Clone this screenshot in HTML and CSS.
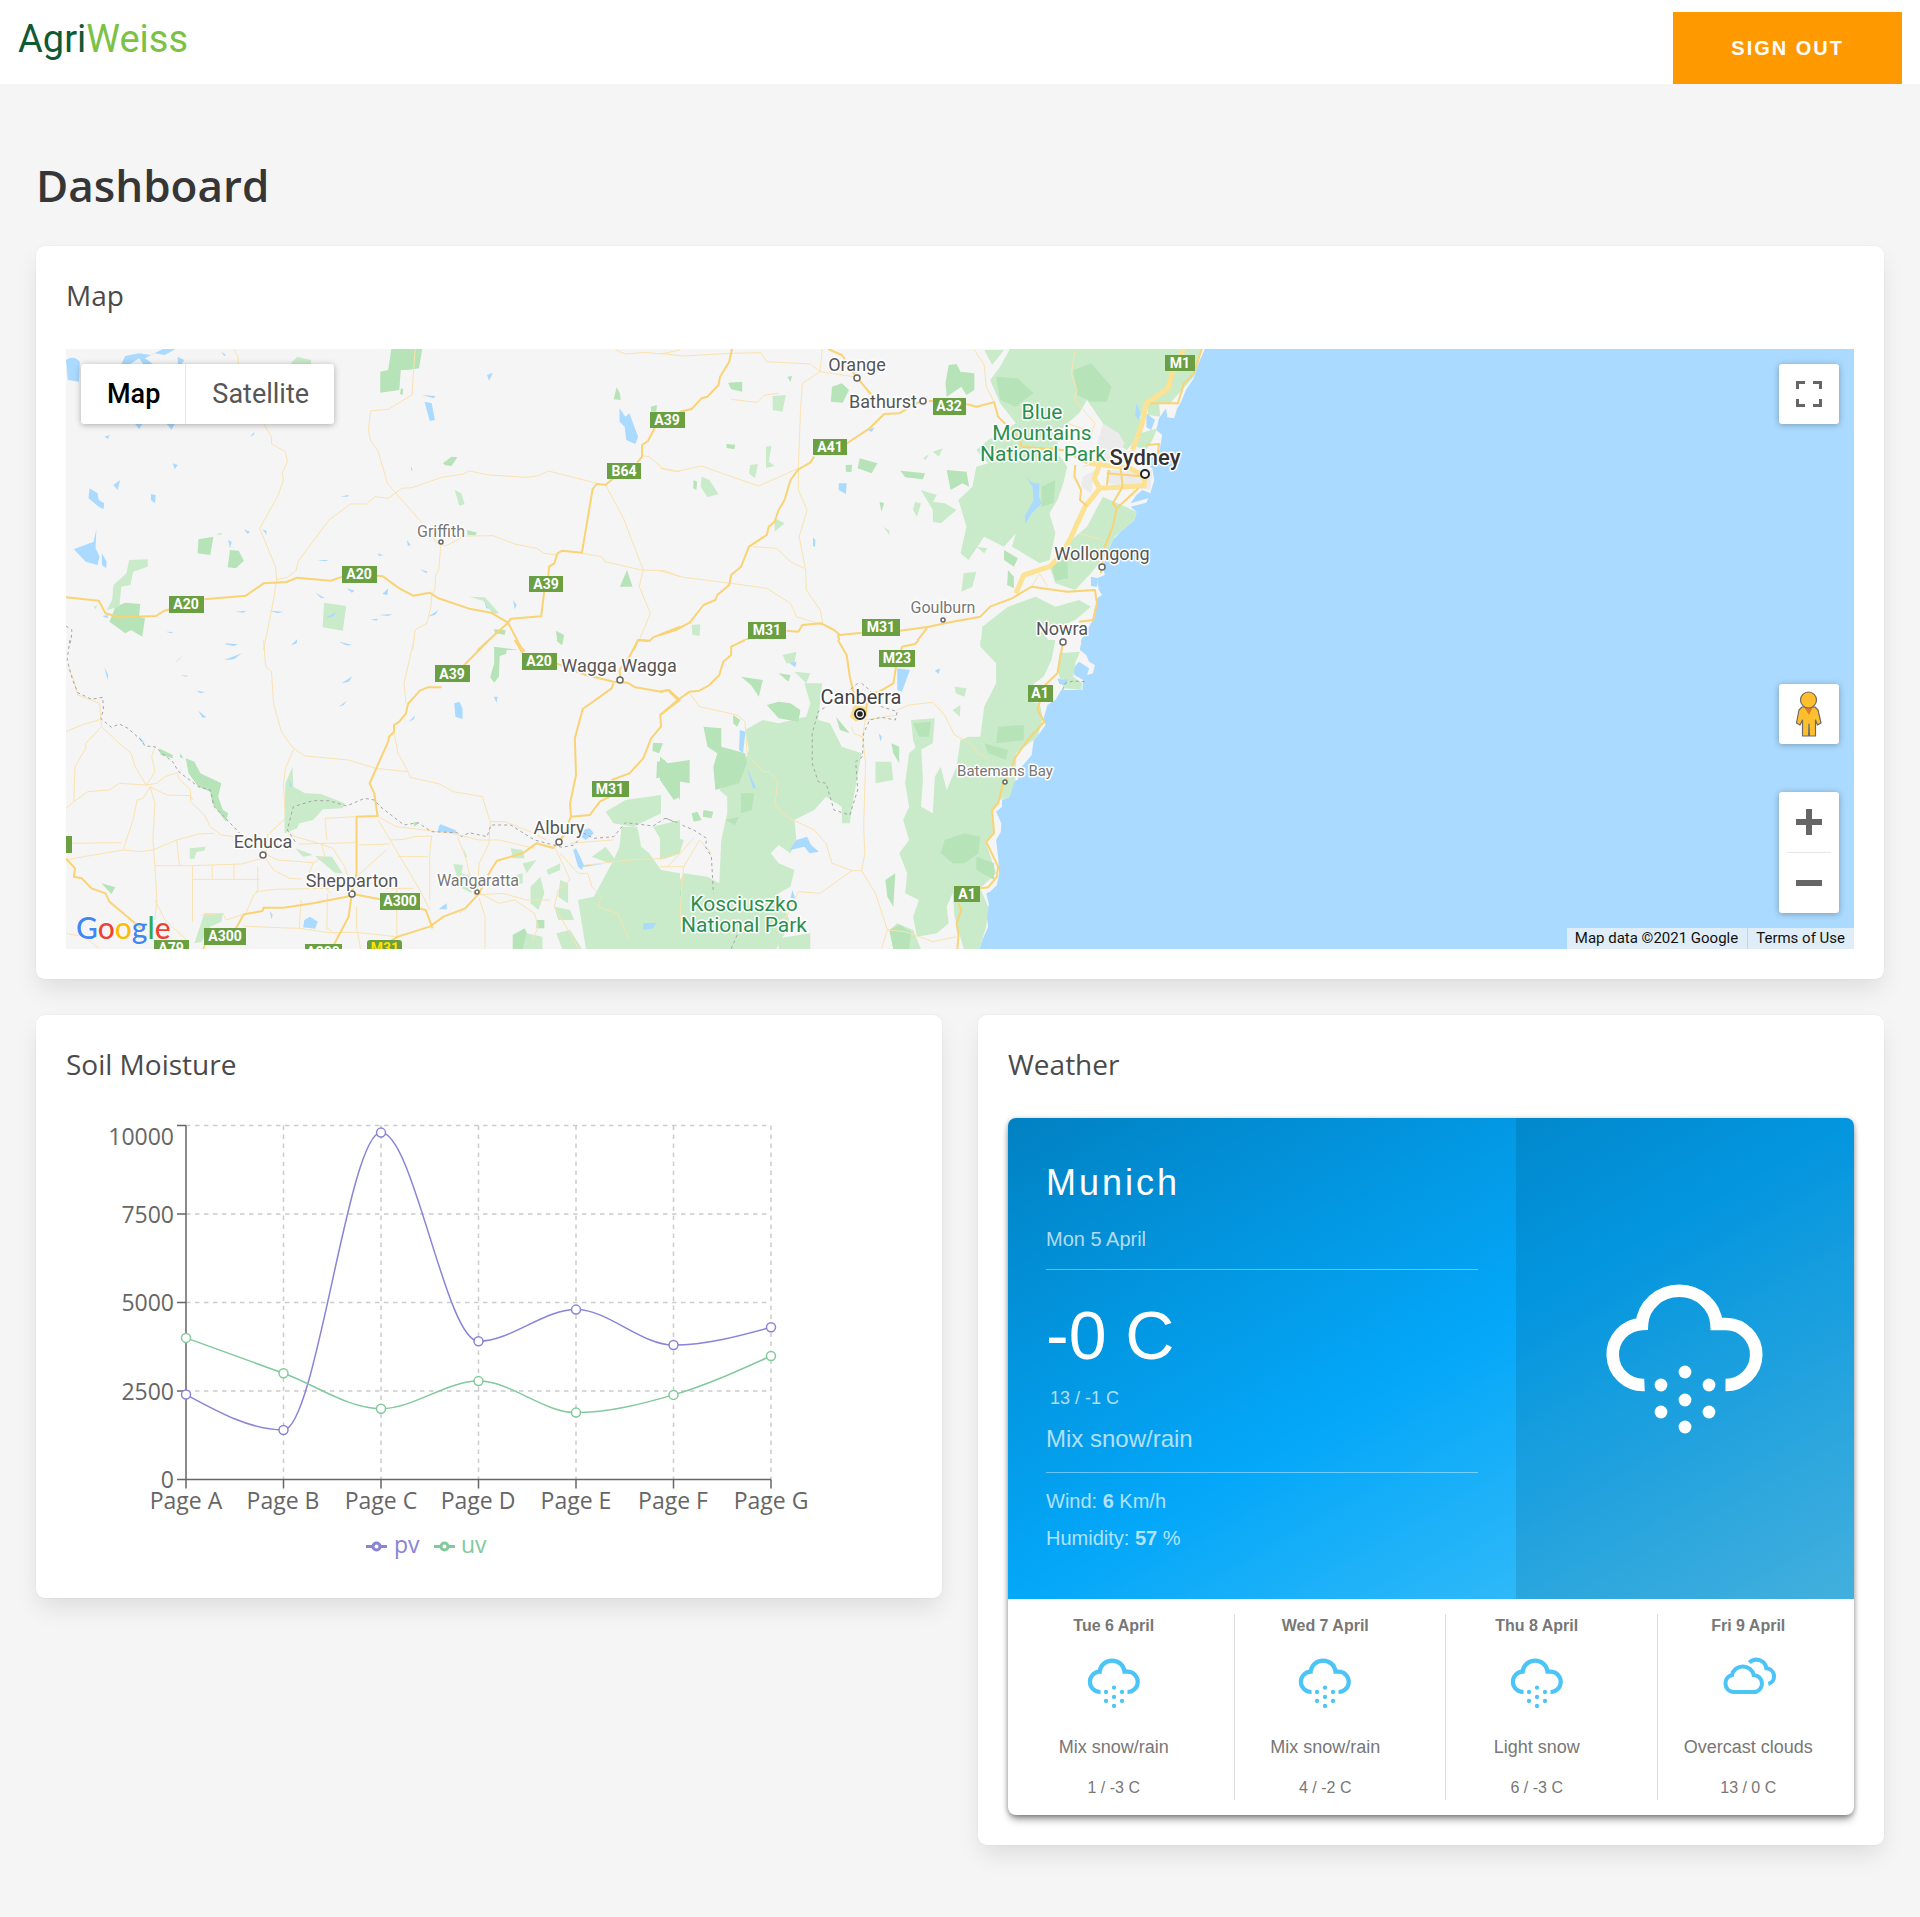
FILE: index.html
```html
<!DOCTYPE html>
<html lang="en">
<head>
<meta charset="utf-8">
<meta name="viewport" content="width=device-width, initial-scale=1">
<title>AgriWeiss Dashboard</title>
<link rel="stylesheet" href="styles.css">
</head>
<body>
<svg class="sprite" aria-hidden="true">
  <symbol id="icon-snow" viewBox="0 0 168 168">
    <path d="M43.500 108A30.5 30.5 0 0 1 41 47A37.3 35 0 0 1 115.500 47H125A30.500 30.500 0 0 1 124.500 108" fill="none" stroke="currentColor" stroke-width="12.600"/>
    <g fill="currentColor"><circle cx="84" cy="95" r="6.400"/><circle cx="60" cy="108" r="6.400"/><circle cx="108" cy="108" r="6.400"/><circle cx="84" cy="123" r="6.400"/><circle cx="60" cy="135" r="6.400"/><circle cx="108" cy="135" r="6.400"/><circle cx="84" cy="150" r="6.400"/></g>
  </symbol>
  <symbol id="icon-clouds" viewBox="0 0 168 168" overflow="visible">
    <g fill="none" stroke="currentColor" stroke-width="12">
      <path d="M39 108A26 26 0 0 1 36 57A33 31 0 0 1 101 57A26 26 0 0 1 107 108Z"/>
      <path d="M88 20A30 30 0 0 1 139 37A24 24 0 0 1 145 84"/>
    </g>
  </symbol>
</svg>

<header class="topbar">
  <a class="logo" href="#"><span class="logo-agri">Agri</span><span class="logo-weiss">Weiss</span></a>
  <button class="sign-out" type="button">SIGN OUT</button>
</header>

<main class="page">
  <h1 class="page-title">Dashboard</h1>

  <section class="card">
    <h2 class="card-title">Map</h2>
    <div class="map">
      <svg class="map-canvas" viewBox="66 349 1788 600" preserveAspectRatio="xMinYMin slice" role="img" aria-label="Map of south-east Australia">
        <!-- north-east: Blue Mountains and Sydney -->
        <g transform="translate(660 340) scale(.39541 .33333)">
          <path class="land" d="M-1600 0H1385L1378 27 1360 75 1350 115 1330 150 1318 185 1308 205 1300 235 1283 232 1280 205 1262 235 1255 270 1270 285 1265 320 1262 340 1240 350 1225 370 1245 385 1250 420 1240 460 1220 450 1205 465 1190 490 1235 475 1230 488 1190 500 1205 515 1200 540 1165 575 1145 600 1135 630 1120 680 1125 705 1105 715 1110 750 1118 765 1105 775 1100 830 1090 850 1080 870 1065 900V915H-1600Z"/>
          <path class="park" d="M885 27H1370L1350 110 1320 150 1290 190 1240 190 1215 230 1220 280 1180 330 1130 290 1120 250 1080 180 1060 220 1020 260 1000 330 1030 380 1020 430 1005 480 985 520 1000 580 985 660 960 670 890 620 900 580 870 620 820 590 780 660 760 640 775 560 755 480 790 440 800 380 830 370 800 330 830 300 900 250 860 190 835 120 860 80Z"/>
          <path class="park" d="M1120 470L1205 515 1200 540 1150 590 1130 640 1090 700 1050 750 1000 730 985 680 1040 600 1080 560ZM880 800L950 770 1000 800 1060 780 1090 800 1050 840 970 880 1000 930H810L815 860ZM820 30L870 30 840 75ZM1230 185L1262 190 1265 230 1235 225ZM1215 280L1258 265 1245 300 1230 330 1205 320ZM285 168L318 165 310 215 285 210ZM268 320L282 318 275 365 290 378 268 384ZM228 375L248 372 240 415 225 400ZM105 410L125 420 148 462 120 472 103 440ZM290 535L315 550 290 575ZM768 700L800 695 790 740 762 755ZM80 855L102 853 100 888 82 884ZM645 485L660 490 650 530 640 510ZM660 450L700 465 690 485 720 490 750 510 710 550 690 545 690 510ZM800 620L828 625 820 640ZM665 355L680 343 672 360ZM690 335L715 325 705 350ZM565 560L580 572 580 585Z"/>
          <path class="wood" d="M1045 90L1090 70 1142 140 1130 185 1090 185 1055 165ZM850 110L905 115 945 160 900 200 860 180ZM730 75L750 72 760 95 795 100 795 150 775 165 762 140 725 170 722 130ZM172 128L208 125 208 155 180 148ZM435 140L460 130 478 150 462 188 432 185ZM322 110L334 108 330 126ZM505 355L550 370 535 400 500 385ZM470 375L486 374 484 396 470 395ZM608 392L670 400 665 418 620 412ZM725 390L775 395 782 440 765 430 735 450ZM555 485L567 490 560 515ZM990 675L1030 655 1032 715 1000 722ZM965 440L1000 420 995 490 965 500ZM880 690L895 710 895 745 878 735ZM870 630L905 655 895 680 870 660ZM168 312L190 314 188 328 168 324ZM85 420L94 425 92 450 84 445Z"/>
          <path class="lake" d="M928 415L945 430 960 430 958 470 965 490 940 520 925 550 922 530 945 480 942 440ZM452 430L472 430 470 462 452 450ZM387 592L393 600 392 620 387 618ZM525 270L542 262 536 276ZM1230 220L1252 240 1242 270 1230 262ZM1090 710L1108 715 1105 740 1090 738ZM1205 190L1215 220 1210 240 1202 225Z"/>
          <path class="town" d="M1120 250L1160 280 1175 310 1150 370 1100 340ZM1100 390L1090 460 1065 440 1070 410ZM1130 390L1245 390 1240 450 1190 440 1130 430Z"/>
          <g class="road-minor">
            <path d="M0 40L60 48 180 40 255 38 270 65 380 72 405 95 360 130 355 220 350 380 350 450 372 510 352 590 368 690 370 750 405 810 412 850"/>
            <path d="M410 27L405 95 490 110M180 178L245 187 265 165 300 160M0 385L40 395 105 378 205 420 250 438 350 385M0 693L60 712 180 730 270 745 330 790 345 830 412 855M235 620L295 625 330 665 365 685M795 30L820 75 825 140 845 185M1050 30L1040 100 1055 150 1048 180 1100 250 1090 290M1030 250L1080 270M1070 380L1200 330M940 740L960 700 980 740M1080 500L1050 545 1040 600M1060 580L1120 600"/>
          </g>
          <g class="road">
            <path d="M182 27L175 65 152 110 148 135 120 170 105 175 80 207 50 215M425 27L460 45 490 100 500 115 535 165M680 183L710 183M775 192L800 200 845 187 855 230 905 290 915 320 1020 330 1080 370"/>
            <path d="M660 183L605 220 567 222 530 265 470 312M390 350L380 368 350 388 330 420 315 480 300 510 290 545 275 560 270 585 225 620 205 680 180 705 175 735 145 765 140 780 110 795 75 848 40 870 0 885M320 872L350 875 360 855 408 850 440 870 455 885 510 878M607 872L680 860 720 850 810 830 835 800 890 775 940 740 1030 755 1100 750 1105 790 1095 840 1060 845M450 885L455 910 465 930M675 865L645 910 610 925M225 895L180 920"/>
          </g>
          <g class="freeway">
            <path d="M1325 27L1295 100 1285 145 1230 190 1220 250 1195 330"/>
            <path d="M1085 370L1190 385 1225 410M1110 380L1098 415 1112 445 1075 500 1040 590 1015 645 985 680 920 705 900 760M1112 445L1225 437 1225 400"/>
          </g>
          <g class="road"><path d="M1370 27L1350 100 1325 130 1310 190 1240 190M1135 390L1130 435M1165 385L1170 440M1170 440L1145 490 1155 505 1145 560 1125 620 1115 700M1210 445L1155 505M1050 375L1048 410 1065 450 1062 480 1080 498M1130 400L1230 410M1230 315L1262 312 1258 350"/></g>
        </g>
        <!-- south-east: Canberra and the coast -->
        <g transform="translate(660 640) scale(.39541 .33333)">
          <path class="land" d="M-1600 0H1065L1062 30 1078 45 1085 65 1100 75 1095 100 1080 105 1085 85 1060 65 1045 85 1048 105 1070 120 1068 150 1015 150 1000 180 980 195 970 235 975 255 960 280 945 300 940 345 915 380 905 420 880 425 885 470 865 480 865 500 850 515 863 550 862 575 850 600 855 650 858 700 852 735 835 755 825 760 832 795 825 820 830 860 815 900 805 935H-1600Z"/>
          <path class="park" d="M810 0H1000L990 60 970 110 935 140 935 185 960 190 968 235 955 290 900 340 900 410 885 470 860 480 840 515 845 580 825 610 850 700 810 745 830 800 825 860 805 935H770L745 830 740 760 725 800 730 850 700 880 650 890 640 830 655 780 620 760 625 700 605 640 630 600 615 540 630 500 620 430 630 340 660 310 665 420 660 500 690 520 695 410 710 380 725 450 750 380 760 300 780 290 810 290 820 200 850 130 850 70 810 20Z"/>
          <path class="park" d="M215 270L260 240 300 250 370 230 380 190 365 130 410 130 400 240 430 250 460 320 510 340 490 470 480 550 460 550 460 500 420 470 390 510 340 540 345 600 330 640 300 615 280 640 300 670 340 690 330 740 300 760 330 850 290 935H0V830L60 700 120 710 150 730 155 600 170 520 170 470 150 450 200 400 225 330ZM635 240L695 235 690 310 650 335 640 300ZM545 365L585 365 590 420 545 430ZM300 895L380 880 380 927H300ZM580 870L600 850 640 870 660 927H590ZM745 140L775 145 770 170 748 160ZM740 210L760 195 758 230ZM0 580L60 600 50 640 0 660ZM1010 40L1062 35 1050 70 1045 110 1068 130 1065 150 1020 145 1005 90ZM310 45L345 35 340 70 320 70ZM340 95L380 100 370 130Z"/>
          <path class="wood" d="M205 110L260 120 250 170 230 135ZM270 195L300 185 330 190 355 210 350 245 300 235ZM300 100L330 105 325 125ZM110 260L155 265 155 320 215 340 220 370 200 430 140 450 135 380 145 340 120 320ZM445 230L480 280 455 270ZM720 600L770 580 810 590 805 640 770 670 740 670 710 640ZM800 650L845 670 845 720 800 690ZM570 720L595 700 590 800 575 770ZM585 310L605 320 605 370 590 340ZM0 720L30 705 55 760 40 800 0 790ZM0 350L20 370 75 360 75 430 30 420 50 470 35 480 0 420ZM165 540L200 530 190 555ZM110 510L135 515 130 535 108 530ZM855 260L920 255 920 300 850 310ZM60 740L40 760ZM80 520L95 515 105 540 85 545ZM185 225L203 240 195 260 185 250ZM580 870L605 855 635 875 630 927H590ZM640 250L685 245 680 290 655 290ZM205 460L238 460 232 510 205 520ZM820 310L850 320 880 330 875 360 830 340Z"/>
          <path class="lake" d="M600 85L632 90 612 155 600 150ZM202 270L216 275 210 340 200 330ZM220 385L244 445 235 445ZM345 600L372 590 382 615 402 635 378 640 365 620 328 630ZM553 280L561 290 558 305ZM505 540L512 580ZM695 92L708 85 705 102ZM328 70L345 65 342 82ZM335 750L342 775 330 775ZM1005 115L1018 120 1033 118 1025 135 1010 132Z"/>
          <g class="road-minor">
            <path d="M75 160L100 200 195 225 215 245 220 340 260 395 275 395 298 425 290 495 320 530 390 570 420 610 435 670 485 692 405 760 350 755 320 830 270 870M510 692L545 760 575 870 620 875 690 905 750 890M575 870L560 927M600 210L630 195 690 187 720 225 745 285 785 310 805 340 830 355M0 680L60 680 100 600 130 640M60 680L55 740 50 860 40 927M20 680L85 595M485 692L510 692 518 640 515 560 520 370 512 290 520 235M485 260L490 280 510 290M520 240L600 225"/>
          </g>
          <g class="road"><path d="M0 155L20 150 45 180 75 155 100 152 125 135 150 105 160 65 180 45 180 20 215 0M0 225L45 180M450 0L472 45 480 110 500 210M655 0L645 12 612 20 597 80 590 130 555 155 525 165 520 230M1018 15L1005 100 970 140 955 210 972 245 930 300 897 355 885 400 868 430 855 490 840 510 845 580 825 605 855 680 852 710 830 742 810 745M755 790L762 810 750 850 755 885 752 927"/></g>
          <path class="city" d="M490 195L520 200 515 235 495 245 480 230Z"/>
          <path class="border" d="M500 130L480 150 480 170M510 130L530 150 560 200 600 215 595 240 560 232 530 240 515 280 512 350 495 365 500 450 480 525 440 510 420 430 400 425 385 370 385 280 400 215 420 200M15 535L85 570 118 595 115 620 130 650 135 760M195 885L180 927M1018 150L1025 130 1045 123 1075 125"/>
        </g>
        <!-- north-west: Griffith and the A20 -->
        <g transform="translate(60 340) scale(.39541 .33333)">
          <path class="wood" d="M838 27H916L908 85 880 90 862 90 858 150 810 158 810 95 830 90ZM862 145L868 148 866 165 860 162ZM968 370L990 350 1005 352 990 378 975 376ZM350 598L388 590 380 645 348 640ZM430 630L452 632 465 662 445 685 424 682ZM1030 570L1055 578 1050 586 1030 584ZM140 800L165 788 203 792 200 830 215 835 208 890 180 870 165 880 125 845ZM1434 690L1448 740H1416ZM1254 872L1275 885 1270 915 1258 905ZM1097 868L1127 870 1125 884 1100 880ZM1408 142L1416 160 1418 180 1400 178ZM1494 200L1510 195 1508 215H1495ZM1097 920L1160 930H1100ZM888 378L892 390 888 392Z"/>
          <path class="park" d="M668 788L724 798 715 872 664 862ZM175 660L222 658 222 680 185 695 178 735 155 740 150 800 118 810 132 780 135 735 168 700ZM998 450L1015 460 1023 492 1010 497ZM1035 770L1075 772 1110 820 1095 822 1070 782ZM585 68L600 50 635 60 635 72H585ZM395 582L412 578 405 586ZM85 800L95 795 90 808Z"/>
          <path class="lake" d="M15 60Q35 45 50 65L48 125 20 120ZM155 72L165 48 200 40 230 45 260 27 292 27 265 45 240 40 215 55 235 72H210L200 55 178 72ZM298 50L314 60 308 72H298ZM922 185L940 190 948 240 935 243ZM1080 105L1095 98 1085 122ZM1415 205L1430 230 1440 220 1462 290 1455 312 1432 300 1428 260 1415 245ZM75 445L95 460 98 480 112 490 110 508 98 500 72 475ZM135 435L152 420 146 450ZM230 462L242 465 240 490 230 480ZM285 370L298 375 290 388ZM35 628L85 605 92 568 90 625 100 650 95 675 65 665ZM106 640L118 665 117 685 106 675ZM425 600L434 605 430 625ZM465 568L480 575 475 582ZM512 568L522 572 522 585ZM877 600L887 615 880 618ZM805 640L818 646 806 648ZM650 660L680 660 670 664ZM915 165L950 168 945 175ZM710 470L730 464 728 470ZM645 757L670 775 660 774ZM725 745L745 752 738 758ZM815 762L830 745 828 765ZM910 687L930 695 926 700ZM1074 785L1085 808 1078 804ZM1146 780L1155 795 1150 808ZM670 835L700 815 690 830ZM785 838L805 836 800 842ZM530 812L565 815 550 820ZM442 815L470 812 465 818ZM930 830L958 810 948 825ZM805 825L840 822 830 828ZM415 912L450 912 440 918ZM585 915L600 898 598 910ZM705 905L738 915 725 916ZM268 875L287 876 280 880ZM480 290L492 275 490 285ZM408 35L420 45 415 48ZM112 290L125 285 122 297ZM270 252H290L282 270ZM190 252H208L200 268ZM107 828L122 825 120 835Z"/>
          <g class="road-minor">
            <path d="M440 27L450 50 452 80M515 252L535 290 535 312 570 335 575 365 562 400 565 420 552 465 505 565 545 680 548 720 540 780 515 930M898 27L890 165 830 208 785 213 780 270 785 300 805 335 828 430 848 458 915 548 930 570 950 605 975 618 1025 588 1095 587 1150 612 1205 625 1225 640 1255 645"/>
            <path d="M548 718L575 712 597 692 602 665 680 540 735 492 775 492 797 470 830 475 865 445 890 443 965 412 1020 402 1035 393 1085 405 1180 412 1210 407 1235 393 1365 432M963 615L958 690 950 705 948 750 940 765 938 800 928 850 898 870 892 930M1380 435L1425 535 1475 690 1465 740 1493 820 1465 900M1320 640L1370 650 1378 665 1470 690 1530 692 1568 710M1470 347L1490 350 1525 385 1568 395M1405 30L1430 42 1480 37 1520 42 1568 30"/>
          </g>
          <path class="road" d="M15 772L98 782 115 820 150 832 243 828 262 813 280 808M365 778L470 767 515 730 573 726 600 713 685 722 715 710M800 707L817 709 855 743 893 767 935 758 955 774 1035 806 1090 818 1133 848 1165 920 1175 935M1055 932L1133 848 1140 836 1217 829 1225 750M1235 708L1237 680 1250 670 1258 640 1270 632 1320 638 1347 447 1357 432 1380 434 1400 415M1460 368L1472 350 1472 315 1487 303 1505 262M1450 932L1462 900 1492 902 1500 892 1568 860"/>
          <path class="border" d="M15 858L30 870 28 900 22 920"/>
        </g>
        <!-- south-west: Murray river and Shepparton -->
        <g transform="translate(60 640) scale(.39541 .33333)">
          <path class="wood" d="M318 355L340 365 355 400 408 430 400 470 412 510 425 520 420 545 385 490 380 455 350 440 325 400ZM1098 22L1130 28 1128 42 1112 48 1110 110 1098 128 1088 112 1098 70ZM250 325L285 345 285 355 255 345ZM1255 0H1272L1268 14ZM1500 308L1525 310 1515 340 1498 332ZM1510 365L1530 360 1530 410 1508 415ZM1540 390L1568 410V480L1550 440ZM1525 720L1568 705V800L1520 770ZM105 730L140 742 130 762ZM1145 885L1175 865 1200 927H1145ZM1205 840H1225V865H1205ZM895 545L908 550 895 560ZM305 340L312 355 303 352Z"/>
          <path class="park" d="M570 430L588 380 590 440 620 460 660 462 720 490 715 505 665 508 640 540 605 550 600 565 568 580V500ZM328 625L368 620 365 632 345 636 340 656H328ZM595 625L640 645 615 650ZM645 648L688 650 715 700 695 698ZM995 672L1020 675 1015 700 1045 710 1040 760 1010 740ZM365 820H412L408 845 380 860 358 905 340 910ZM1140 625L1170 630 1175 655 1145 655ZM1380 515L1430 480 1520 465 1520 520 1450 560 1400 550ZM1330 927L1310 780 1350 770 1400 660 1415 620 1420 560 1460 560 1470 620 1490 640 1520 690 1568 700V927ZM1230 690L1265 670 1265 690 1235 705ZM1170 670L1205 660 1180 700ZM1190 740L1215 710 1225 760 1210 810 1190 790ZM1265 720L1285 730 1285 790 1260 770ZM1250 800L1290 810 1300 840 1260 840ZM1180 880L1220 890 1220 927H1170ZM1255 880L1290 870 1320 927H1270ZM1345 650L1380 620 1405 660 1390 670ZM1170 700L1155 705 1155 735 1170 730ZM1020 625L1030 650 1025 655ZM1500 560L1568 540V600L1530 620Z"/>
          <path class="lake" d="M997 190L1010 185 1018 205 1018 237 1000 230ZM1097 170L1107 170 1104 188ZM200 290L215 310 205 305ZM618 840L632 830 652 845 645 866 615 862ZM965 800L978 790 978 808H958ZM958 560L962 553 1000 570 1005 580 955 575ZM1298 630L1305 625 1325 675 1372 672 1322 682 1320 690 1310 680ZM1320 570L1340 565 1350 580 1330 600 1318 590ZM530 812L538 825 535 838ZM1475 850L1508 848 1500 865 1475 870ZM415 60L460 40 440 58ZM290 68L312 45 300 60ZM415 10L445 12 440 18ZM112 80L122 105 120 120ZM345 152L368 156 355 160ZM350 212L370 232 360 233ZM712 130L740 108 730 125ZM705 200L725 182 718 195ZM883 245L898 225 895 238ZM305 105L325 107 318 110ZM585 15L600 0 598 10ZM705 5L738 15 725 16ZM580 420L586 435 582 442Z"/>
          <g class="road-minor">
            <path d="M15 275L55 255 105 237M20 80L35 120 45 165 100 190 105 260 65 310 65 325 38 380 35 485 15 505M105 260L150 310 180 340 190 380 218 435 150 430 125 450 70 455 35 485M218 435L230 415 240 395 232 350 240 320M218 435L245 430 265 410 297 398 300 415 330 450 330 485 365 525 380 560 408 585 455 592M228 440L270 465 330 467 335 480M228 440L210 475 195 480 185 540 165 610 160 630M228 440L240 490 235 600 240 680 245 780 240 840M15 610L155 608M15 660L60 650 160 630 200 635 235 630 295 600 350 582 390 580M295 600L302 675"/>
            <path d="M515 0L520 80 535 95 540 190 560 275 590 325 620 348 730 360 798 385 880 395 885 412 960 432 995 455 1068 470 1088 545 1085 610 1060 670 1055 755M895 0L870 130 875 190M845 280L855 340 880 395M590 330L570 385 565 430 570 535 525 585 520 650 M525 645L550 660 640 668M520 655L540 690 580 715 610 717M670 535L745 530M670 535L675 600M575 575L595 590 660 612 690 625 720 680 740 760M605 612L745 608M755 615L835 612M660 610L670 645 640 670 630 700 685 760M240 677L335 677 460 672 510 655M335 677V845M335 718H505M385 677V718M440 675V718M500 680V755L490 765 470 820M495 755L545 748 680 745M605 865L610 780M605 865L530 862 465 858M605 865L680 878 750 877 850 890M750 800L750 860 760 927M750 710L825 630M855 650H930M825 745H895M805 540L815 560 845 620 910 750 935 810M835 600L870 598 895 590 940 588 935 640V780M805 530L850 560 920 570 990 580 1060 600 1110 600 1200 625M1005 590L1025 650 1050 770 1010 820M1090 545L1125 545 1190 575 1230 600M1055 755L1110 790 1150 780 1200 820 1210 860 1195 900M1060 775L1075 830 1075 927M1050 765L1120 760 1180 780 1240 780M1250 620L1275 680 1290 720 1260 750 1250 800 1300 900 1310 927M1265 640L1310 700 1335 700 1345 740 1370 770 1360 800 1410 820 1440 900M1290 610L1340 605 1400 600M1320 685L1330 675 1440 660 1530 655 1568 640M15 880L60 890 100 927M240 780L265 840 325 905"/>
            <path d="M676 760L675 870M851 710L852 890M677 865L700 885M358 825L412 820 420 840 465 822M245 880L245 927"/>
          </g>
          <g class="road">
            <path d="M1085 0L1020 78M965 142L930 142 910 152 880 192 875 220 858 245 845 255 845 275 832 290 830 305 798 390 783 430 795 460 803 528 750 530 750 700 738 760 730 830 690 920M1150 0L1170 40M1255 70L1330 105 1400 125 1435 128 1455 142 1520 155 1540 150 1568 180M1400 130L1395 145 1322 207 1302 295 1305 405 1290 490 1292 530 1275 585 1250 620M1417 118L1415 90 1440 50 1462 0 1492 3M1292 530L1340 525 1365 485 1390 470M1395 420L1440 400 1475 355 1495 295 1520 260 1518 225 1568 180M1250 625L1205 610 1170 640 1105 662 1085 700 1060 760 1025 805 970 830 935 860 855 890 800 927M740 762L810 778M735 768L640 790 565 803 515 803 512 813 465 823 445 865M363 927L368 905M908 805L925 810 942 865M15 655L38 685 35 710 55 715 80 745 115 760 125 785 190 850 210 870"/>
          </g>
          <path class="border" d="M25 0L18 60 32 120 45 158 80 178 108 172 110 210 103 235 130 262 150 252 172 265 205 300 215 318 240 320 260 342 285 365 300 395 350 440 380 450 390 500 415 530 455 580M595 605L575 570 590 500 640 482 680 482 725 498 770 475 795 480 810 500 870 555 905 548 940 575 1005 578 1015 590 1035 578 1080 590 1090 555 1140 555 1200 600 1270 622 1300 615 1325 580 1350 595 1400 590 1430 548 1500 558 1530 535 1568 550"/>
        </g>

        <g class="markers">
          <circle cx="857" cy="378" r="3"/><circle cx="923" cy="401" r="3"/><circle cx="441" cy="542" r="2"/><circle cx="1102" cy="567" r="3"/><circle cx="943" cy="620" r="2"/><circle cx="1063" cy="642" r="3"/><circle cx="620" cy="680" r="3"/><circle cx="1005" cy="782" r="2"/><circle cx="263" cy="855" r="3"/><circle cx="352" cy="894" r="3"/><circle cx="477" cy="892" r="2"/><circle cx="559" cy="842" r="3"/>
          <circle class="marker-city" cx="1145" cy="474" r="4"/><circle class="marker-city" cx="860" cy="714" r="5"/><circle class="marker-dot" cx="860" cy="714" r="2"/>
        </g>
        <g class="place">
          <text x="857" y="371">Orange</text><text x="883" y="408">Bathurst</text><text x="1102" y="560">Wollongong</text><text x="1062" y="635">Nowra</text><text x="619" y="672">Wagga Wagga</text><text x="263" y="848">Echuca</text><text x="352" y="887">Shepparton</text><text x="559" y="834">Albury</text>
          <text class="place-small" x="441" y="537">Griffith</text><text class="place-small" x="943" y="613">Goulburn</text><text class="place-tiny" x="1005" y="776">Batemans Bay</text><text class="place-small" x="478" y="886">Wangaratta</text>
          <text class="place-capital" x="861" y="704">Canberra</text><text class="place-metro" x="1145" y="465">Sydney</text>
          <text class="place-park" x="1042" y="419">Blue</text><text class="place-park" x="1042" y="440">Mountains</text><text class="place-park" x="1043" y="461">National Park</text>
          <text class="place-park" x="744" y="911">Kosciuszko</text><text class="place-park" x="744" y="932">National Park</text>
        </g>
        <g class="shields">
          <rect x="650" y="412" width="35" height="16"/><text x="667" y="425">A39</text>
          <rect x="607" y="463" width="34" height="16"/><text x="624" y="476">B64</text>
          <rect x="813" y="439" width="34" height="16"/><text x="830" y="452">A41</text>
          <rect x="933" y="398" width="33" height="17"/><text x="949" y="411">A32</text>
          <rect x="1165" y="355" width="30" height="16"/><text x="1180" y="368">M1</text>
          <rect x="342" y="566" width="35" height="17"/><text x="359" y="579">A20</text>
          <rect x="529" y="576" width="34" height="16"/><text x="546" y="589">A39</text>
          <rect x="169" y="596" width="35" height="17"/><text x="186" y="609">A20</text>
          <rect x="748" y="622" width="38" height="17"/><text x="767" y="635">M31</text>
          <rect x="862" y="619" width="38" height="17"/><text x="881" y="632">M31</text>
          <rect x="879" y="650" width="36" height="17"/><text x="897" y="663">M23</text>
          <rect x="522" y="653" width="35" height="17"/><text x="539" y="666">A20</text>
          <rect x="435" y="665" width="35" height="17"/><text x="452" y="679">A39</text>
          <rect x="1028" y="685" width="25" height="17"/><text x="1040" y="698">A1</text>
          <rect x="592" y="781" width="37" height="16"/><text x="610" y="794">M31</text>
          <rect x="954" y="886" width="26" height="16"/><text x="967" y="899">A1</text>
          <rect x="380" y="893" width="40" height="17"/><text x="400" y="906">A300</text>
          <rect x="204" y="928" width="42" height="17"/><text x="225" y="941">A300</text>
          <rect x="154" y="940" width="35" height="17"/><text x="171" y="953">A79</text>
          <rect x="305" y="944" width="37" height="17"/><text x="323" y="957">A300</text>
          <rect x="367" y="940" width="35" height="17" rx="3"/><text class="shield-gold" x="385" y="953">M31</text>
          <rect x="42" y="836" width="30" height="17"/>
        </g>
      </svg>

      <div class="map-types">
        <button class="map-type map-type-active" type="button">Map</button>
        <button class="map-type" type="button">Satellite</button>
      </div>
      <div class="map-tools">
        <button class="map-button map-fullscreen" type="button" aria-label="Toggle fullscreen view">
          <svg width="28" height="28" viewBox="0 0 28 28" fill="none" stroke="#666" stroke-width="3"><path d="M2.500 9V2.500H10M18 2.500H25.500V9M25.500 19V25.500H18M10 25.500H2.500V19"/></svg>
        </button>
        <button class="map-button map-pegman" type="button" aria-label="Street View">
          <svg width="28" height="46" viewBox="0 0 28 46" stroke="#6d6a66" stroke-width="1.200" stroke-linejoin="round"><path fill="#fdbf2d" d="M7 16H20L23 19 26 32 22.500 34 20.500 29V45H14.500L14 33 13.500 45H7.500V29L5 34 1.500 32 4 19Z"/><path fill="#e17b2c" stroke="none" d="M9 16H18L14 24Z"/><circle cx="13.500" cy="9" r="8" fill="#fdbf2d"/></svg>
        </button>
        <div class="map-zoom">
          <button class="map-zoom-button" type="button" aria-label="Zoom in"><svg width="26" height="26" viewBox="0 0 26 26" fill="#666"><path d="M10 0H16V10H26V16H16V26H10V16H0V10H10Z"/></svg></button>
          <button class="map-zoom-button" type="button" aria-label="Zoom out"><svg width="26" height="26" viewBox="0 0 26 26" fill="#666"><path d="M0 10H26V16H0Z"/></svg></button>
        </div>
      </div>
      <a class="google" href="#" aria-label="Google"><span class="g-blue">G</span><span class="g-red">o</span><span class="g-yellow">o</span><span class="g-blue">g</span><span class="g-green">l</span><span class="g-red">e</span></a>
      <div class="map-legal"><span class="legal-item">Map data ©2021 Google</span><a class="legal-item" href="#">Terms of Use</a></div>
    </div>
  </section>

  <div class="columns">
    <section class="card">
      <h2 class="card-title">Soil Moisture</h2>
      <svg class="chart" width="750" height="450" viewBox="0 0 750 450" role="img" aria-label="Soil moisture line chart">
        <path class="grid" d="M120 7.500H705M120 96H705M120 184.500H705M120 273H705M217.500 7.500V361.500M315 7.500V361.500M412.500 7.500V361.500M510 7.500V361.500M607.500 7.500V361.500M705 7.500V361.500"/>
        <path class="axis" d="M120 7.500V361.500H705M111 7.500H120M111 96H120M111 184.500H120M111 273H120M111 361.500H120M120 361.500V370.500M217.500 361.500V370.500M315 361.500V370.500M412.500 361.500V370.500M510 361.500V370.500M607.500 361.500V370.500M705 361.500V370.500"/>
        <g class="tick tick-y"><text x="108" y="27">10000</text><text x="108" y="105">7500</text><text x="108" y="193">5000</text><text x="108" y="282">2500</text><text x="108" y="370">0</text></g>
        <g class="tick tick-x"><text x="120" y="391">Page A</text><text x="217" y="391">Page B</text><text x="315" y="391">Page C</text><text x="412" y="391">Page D</text><text x="510" y="391">Page E</text><text x="607" y="391">Page F</text><text x="705" y="391">Page G</text></g>
        <g class="series series-pv">
          <path d="M120 276.500C152.500 294.200 185 312 217.500 312C250 312 282.500 14.600 315 14.600C347.500 14.600 380 223.200 412.500 223.200C445 223.200 477.500 191.600 510 191.600C542.500 191.600 575 227 607.500 227C640 227 672.500 218.200 705 209.300"/>
          <circle cx="120" cy="276.500" r="4.500"/><circle cx="217.500" cy="312" r="4.500"/><circle cx="315" cy="14.600" r="4.500"/><circle cx="412.500" cy="223.200" r="4.500"/><circle cx="510" cy="191.600" r="4.500"/><circle cx="607.500" cy="227" r="4.500"/><circle cx="705" cy="209.300" r="4.500"/>
        </g>
        <g class="series series-uv">
          <path d="M120 219.900C152.500 231.700 185 243.500 217.500 255.300C250 267.100 282.500 290.700 315 290.700C347.500 290.700 380 263.100 412.500 263.100C445 263.100 477.500 294.600 510 294.600C542.500 294.600 575 286.300 607.500 276.900C640 267.500 672.500 252.700 705 238"/>
          <circle cx="120" cy="219.900" r="4.500"/><circle cx="217.500" cy="255.300" r="4.500"/><circle cx="315" cy="290.700" r="4.500"/><circle cx="412.500" cy="263.100" r="4.500"/><circle cx="510" cy="294.600" r="4.500"/><circle cx="607.500" cy="276.900" r="4.500"/><circle cx="705" cy="238" r="4.500"/>
        </g>
        <g class="legend legend-pv"><path d="M300 428.500H321"/><circle cx="310.500" cy="428.500" r="3.500"/><text x="328" y="435">pv</text></g>
        <g class="legend legend-uv"><path d="M368 428.500H389"/><circle cx="378.500" cy="428.500" r="3.500"/><text x="395" y="435">uv</text></g>
      </svg>
    </section>

    <section class="card">
      <h2 class="card-title">Weather</h2>
      <div class="weather">
        <div class="today">
          <div class="today-info">
            <h3 class="city-name">Munich</h3>
            <p class="today-date">Mon 5 April</p>
            <p class="today-temp">-0 C</p>
            <p class="today-range">13 / -1 C</p>
            <p class="today-desc">Mix snow/rain</p>
            <div class="today-extra">
              <p>Wind: <b>6</b> Km/h</p>
              <p>Humidity: <b>57</b> %</p>
            </div>
          </div>
          <div class="today-icon"><svg width="168" height="168"><use href="#icon-snow"/></svg></div>
        </div>
        <ul class="forecast">
          <li class="day"><h4 class="day-date">Tue 6 April</h4><svg class="day-icon" width="56" height="56"><use href="#icon-snow"/></svg><p class="day-desc">Mix snow/rain</p><p class="day-range">1 / -3 C</p></li>
          <li class="day"><h4 class="day-date">Wed 7 April</h4><svg class="day-icon" width="56" height="56"><use href="#icon-snow"/></svg><p class="day-desc">Mix snow/rain</p><p class="day-range">4 / -2 C</p></li>
          <li class="day"><h4 class="day-date">Thu 8 April</h4><svg class="day-icon" width="56" height="56"><use href="#icon-snow"/></svg><p class="day-desc">Light snow</p><p class="day-range">6 / -3 C</p></li>
          <li class="day"><h4 class="day-date">Fri 9 April</h4><svg class="day-icon" width="56" height="56"><use href="#icon-clouds"/></svg><p class="day-desc">Overcast clouds</p><p class="day-range">13 / 0 C</p></li>
        </ul>
      </div>
    </section>
  </div>
</main>
</body>
</html>
```
FILE: styles.css
```css
*, *::before, *::after { box-sizing: border-box; }

body {
  margin: 0;
  background: #f5f5f5;
  color: #4a4a4a;
  font-family: "Open Sans", "Noto Sans", sans-serif;
}

h1, h2, h3, h4, p, ul { margin: 0; padding: 0; }
button { border: 0; padding: 0; cursor: pointer; }
.sprite { display: block; width: 0; height: 0; }

/* Top bar */
.topbar {
  display: flex;
  justify-content: space-between;
  align-items: flex-start;
  padding: 12px 18px 0;
  background: #fff;
}
.logo {
  font: 38px/54px Roboto, sans-serif;
  text-decoration: none;
}
.logo-agri { color: #0f5a32; }
.logo-weiss { color: #7bc144; }
.sign-out {
  padding: 0 58px;
  background: #ff9900;
  color: #fff;
  font: bold 20px/72px "Liberation Sans", Arial, sans-serif;
  letter-spacing: 2px;
}

/* Page */
.page { padding: 71px 36px 72px; }
.page-title {
  margin-bottom: 31px;
  color: #363636;
  font-size: 44px;
  font-weight: 600;
  line-height: 60px;
}
.card {
  padding: 30px;
  border-radius: 9px;
  background: #fff;
  box-shadow: 0 12px 24px -3px rgba(10, 10, 10, .1), 0 0 0 1px rgba(10, 10, 10, .02);
}
.card-title {
  margin-bottom: 35px;
  font-size: 28px;
  font-weight: 400;
  line-height: 38px;
}
.columns {
  display: grid;
  grid-template-columns: repeat(2, minmax(0, 1fr));
  gap: 36px;
  align-items: start;
  margin-top: 36px;
}

/* Map */
.map {
  position: relative;
  height: 600px;
  overflow: hidden;
  background: #aadaff;
  font-family: Roboto, sans-serif;
}
.map-canvas { display: block; width: 100%; height: 100%; }
.map-canvas path { vector-effect: non-scaling-stroke; }
.land { fill: #f5f5f5; }
.park { fill: #c9ebca; }
.wood { fill: #b7e3b8; }
.lake { fill: #aadaff; }
.town { fill: #ebebeb; }
.city { fill: #fbdf92; }
.road-minor, .road, .freeway { fill: none; stroke-linejoin: round; }
.road-minor { stroke: #fae3b0; stroke-width: 1px; }
.road { stroke: #f9d374; stroke-width: 2px; }
.freeway { stroke: #fde293; stroke-width: 5px; }
.border { fill: none; stroke: #a5a5a5; stroke-width: 1px; stroke-dasharray: 3 3; }
.markers circle { fill: #fff; stroke: #666; stroke-width: 1.5px; }
.markers .marker-city { stroke: #222; stroke-width: 2px; }
.markers .marker-dot { fill: #222; stroke: #222; }
.place {
  fill: #555;
  stroke: #fff;
  stroke-width: 3px;
  stroke-linejoin: round;
  paint-order: stroke;
  font-size: 18px;
  text-anchor: middle;
}
.place-small { fill: #777; font-size: 16px; }
.place-tiny { fill: #777; font-size: 15px; }
.place-capital { fill: #444; font-size: 20px; }
.place-metro { fill: #333; font-size: 22px; font-weight: 500; }
.place-park { fill: #2a8f4d; font-size: 21px; }
.shields rect { fill: #6a9f42; }
.shields text { fill: #fff; font-size: 14px; font-weight: 700; text-anchor: middle; }
.shields .shield-gold { fill: #ffe100; }

.map-types {
  position: absolute;
  top: 15px;
  left: 15px;
  display: flex;
  border-radius: 3px;
  box-shadow: 0 1px 6px rgba(0, 0, 0, .3);
  background: #fff;
}
.map-type {
  padding: 0 25px 0 26px;
  background: none;
  color: #565656;
  font: 27px/60px Roboto, sans-serif;
}
.map-type-active {
  border-right: 1px solid #e6e6e6;
  color: #000;
  font-weight: 500;
}
.map-tools {
  position: absolute;
  top: 15px;
  right: 15px;
  bottom: 36px;
  display: flex;
  flex-direction: column;
  width: 60px;
}
.map-button, .map-zoom {
  border-radius: 3px;
  background: #fff;
  box-shadow: 0 1px 6px rgba(0, 0, 0, .3);
}
.map-button { display: grid; place-items: center; height: 60px; }
.map-pegman { margin-top: auto; margin-bottom: 48px; }
.map-zoom { display: flex; flex-direction: column; padding: 0 8px; }
.map-zoom-button { display: grid; place-items: center; height: 60px; background: none; }
.map-zoom-button + .map-zoom-button { height: 61px; border-top: 1px solid #e6e6e6; }
.google {
  position: absolute;
  left: 10px;
  bottom: 6px;
  font: 500 30px/32px Lato, sans-serif;
  text-decoration: none;
  text-shadow: 0 0 2px #fff, 0 0 2px #fff;
}
.g-blue { color: #4285f4; }
.g-red { color: #ea4335; }
.g-yellow { color: #fbbc05; }
.g-green { color: #34a853; }
.map-legal {
  position: absolute;
  right: 0;
  bottom: 0;
  display: flex;
  gap: 1px;
}
.legal-item {
  padding: 0 9px 0 8px;
  background: rgba(245, 245, 245, .7);
  color: #111;
  font-size: 15px;
  line-height: 21px;
  text-decoration: none;
}

/* Chart */
.chart { display: block; max-width: 100%; height: auto; }
.grid { fill: none; stroke: #ccc; stroke-width: 1.5px; stroke-dasharray: 4.5 4.5; }
.axis { fill: none; stroke: #666; stroke-width: 1.5px; }
.tick { fill: #666; font-size: 23px; }
.tick-y { text-anchor: end; }
.tick-x { text-anchor: middle; }
.series path { fill: none; stroke-width: 1.5px; }
.series circle { fill: #fff; stroke-width: 1.5px; }
.series-pv, .legend-pv { stroke: #8884d8; }
.series-uv, .legend-uv { stroke: #82ca9d; }
.legend { font-size: 23px; }
.legend path { stroke-width: 3px; }
.legend circle { fill: #fff; stroke-width: 3px; }
.legend text { stroke: none; }
.legend-pv text { fill: #8884d8; }
.legend-uv text { fill: #82ca9d; }

/* Weather */
.weather {
  border-radius: 8px;
  overflow: hidden;
  background: #fff;
  box-shadow: 0 1px 5px rgba(0, 0, 0, .3), 0 6px 9px -2px rgba(0, 0, 0, .4);
  font-family: "Liberation Sans", Arial, sans-serif;
}
.today {
  display: flex;
  background: linear-gradient(to bottom right, #0181c2, #04a7f9, #4bc4f7);
  color: rgba(255, 255, 255, .7);
}
.today-info { width: 60%; padding: 37px 38px; }
.today-icon {
  display: grid;
  place-items: center;
  width: 40%;
  padding-top: 4px;
  background: rgba(0, 0, 0, .1);
  color: #fff;
}
.city-name { color: #fff; font-size: 36px; font-weight: 400; line-height: 56px; letter-spacing: 3px; }
.today-date { padding-bottom: 2px; border-bottom: 1px solid rgba(255, 255, 255, .4); font-size: 20px; line-height: 56px; }
.today-temp { margin: 25px 0 2px; color: #fff; font-size: 68px; line-height: 80px; }
.today-range { padding-left: 4px; font-size: 18px; line-height: 43px; }
.today-desc { padding-bottom: 14px; border-bottom: 1px solid rgba(255, 255, 255, .4); font-size: 24px; line-height: 38px; }
.today-extra { padding: 10px 0 5px; font-size: 20px; line-height: 37px; }

/* The day columns sit 15px to the right, so each divider falls in the gutter after its text. */
.forecast {
  display: grid;
  grid-template-columns: repeat(4, 1fr);
  margin-right: -15px;
  padding: 15px 0 15px 15px;
  list-style: none;
}
.day { padding-right: 29px; border-right: 1px solid #ddd; color: #777; text-align: center; white-space: nowrap; }
.day-date { font-size: 16px; line-height: 24px; }
.day-icon { display: block; margin: 18px auto 23px; overflow: visible; color: #4bc4f7; }
.day-desc { font-size: 18px; line-height: 24px; }
.day-range { margin-top: 17px; font-size: 16px; line-height: 24px; }
```
